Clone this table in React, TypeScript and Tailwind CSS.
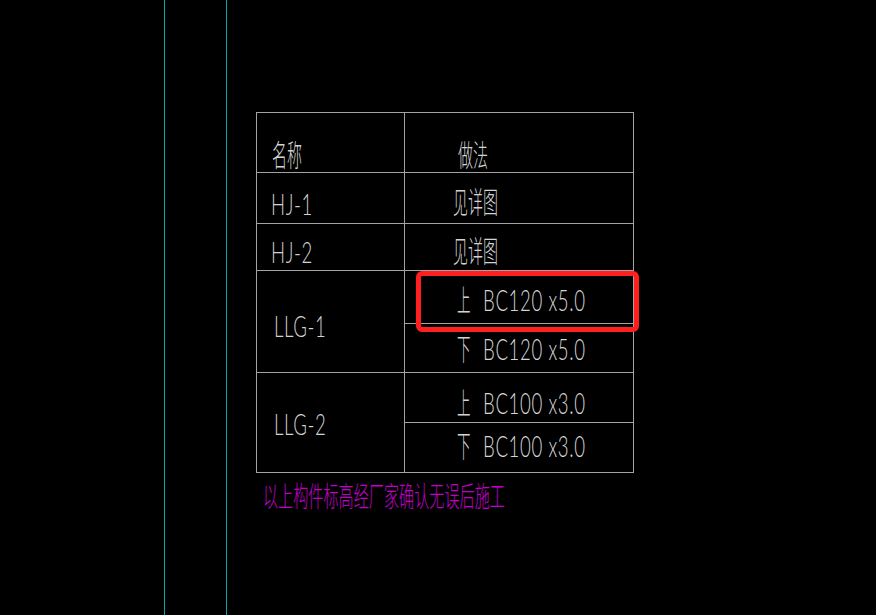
const line = "border-[#a3a3a3]";

const Zh = ({ children, className = "" }: { children: React.ReactNode; className?: string }) => (
  <span className={"inline-block whitespace-nowrap origin-left scale-x-[0.5] text-[30px] leading-[30px] " + className}>
    {children}
  </span>
);

const En = ({ children, className = "" }: { children: React.ReactNode; className?: string }) => (
  <span className={"inline-block whitespace-nowrap origin-left scale-x-[0.62] text-[30px] leading-[30px] tracking-[1px] " + className}>
    {children}
  </span>
);

const Spec = ({ pos, value, pt }: { pos: string; value: string; pt: string }) => (
  <div className={"flex pl-[52px] " + pt}>
    <span className="w-[26px] shrink-0">
      <Zh className="scale-x-[0.45]">{pos}</Zh>
    </span>
    <En>{value}</En>
  </div>
);

export default function App() {
  return (
    <div className="w-[876px] h-[615px] bg-black flex overflow-hidden relative text-[#d4d4d4] font-light font-['Lato','Noto_Sans_CJK_SC',sans-serif]">
      <div className="w-[164px] shrink-0" />
      <div className="w-px shrink-0 bg-[#0aa3ad]" />
      <div className="w-[61px] shrink-0" />
      <div className="w-px shrink-0 bg-[#0aa3ad]" />

      <div className="pl-[29px] pt-[112px] flex flex-col">
        <div className={"w-[378px] border " + line}>
          {/* header */}
          <div className={"flex h-[60px] border-b " + line}>
            <div className={"w-[148px] shrink-0 border-r pl-[15px] pt-[26px] " + line}>
              <Zh>名称</Zh>
            </div>
            <div className="pl-[53px] pt-[26px]">
              <Zh>做法</Zh>
            </div>
          </div>

          <div className={"flex h-[51px] border-b " + line}>
            <div className={"w-[148px] shrink-0 border-r pl-[14px] pt-[15px] " + line}>
              <En>HJ-1</En>
            </div>
            <div className="pl-[48px] pt-[13px]">
              <Zh>见详图</Zh>
            </div>
          </div>

          <div className={"flex h-[47px] border-b " + line}>
            <div className={"w-[148px] shrink-0 border-r pl-[14px] pt-[12px] " + line}>
              <En>HJ-2</En>
            </div>
            <div className="pl-[48px] pt-[11px]">
              <Zh>见详图</Zh>
            </div>
          </div>

          <div className={"flex h-[102px] border-b " + line}>
            <div className={"w-[148px] shrink-0 border-r pl-[17px] pt-[39px] " + line}>
              <En>LLG-1</En>
            </div>
            <div className="w-[228px] min-w-0 flex flex-col">
              <div className={"h-[53px] border-b " + line}>
                <Spec pos="上" value="BC120 x5.0" pt="pt-[13px]" />
              </div>
              <Spec pos="下" value="BC120 x5.0" pt="pt-[9px]" />
            </div>
          </div>

          <div className="flex h-[99px]">
            <div className={"w-[148px] shrink-0 border-r pl-[17px] pt-[35px] " + line}>
              <En>LLG-2</En>
            </div>
            <div className="w-[228px] min-w-0 flex flex-col">
              <div className={"h-[50px] border-b " + line}>
                <Spec pos="上" value="BC100 x3.0" pt="pt-[14px]" />
              </div>
              <Spec pos="下" value="BC100 x3.0" pt="pt-[7px]" />
            </div>
          </div>
        </div>

        <div className="pl-[7px] pt-[9px] text-[#c000c8]">
          <span className="inline-block whitespace-nowrap origin-left scale-x-[0.54] text-[28px] leading-[28px] font-light">
            以上构件标高经厂家确认无误后施工
          </span>
        </div>
      </div>

      {/* red highlight annotation */}
      <div className="absolute left-[416px] top-[271px] w-[223px] h-[61px] border-[5px] border-[#ff1f1f] rounded-[6px]" />
    </div>
  );
}
